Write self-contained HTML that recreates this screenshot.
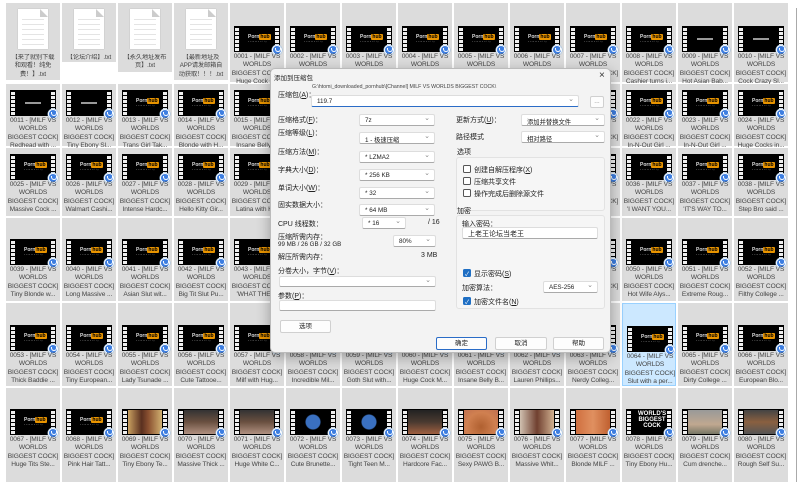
<!DOCTYPE html>
<html><head><meta charset="utf-8">
<style>
*{box-sizing:border-box;margin:0;padding:0}
body{width:800px;height:482px;overflow:hidden;background:#fff;font-family:"Liberation Sans","Noto Sans CJK SC",sans-serif;position:relative}
.cell{position:absolute;width:54px;background:#dcdcdc}
.sel{background:#cce8ff;border:1px solid #99d1ff}
.th{position:absolute;width:46px;height:26px;left:4px;background:#000;overflow:hidden}
.th:before,.th:after{content:"";position:absolute;top:1px;bottom:1px;width:4px;background:repeating-linear-gradient(#000 0 1px,#eee 1px 4px)}
.th:before{left:1px}.th:after{right:1px}
.ph{position:absolute;left:14px;top:8px;font-size:5px;font-weight:bold;color:#ddd;white-space:nowrap}
.ph b{background:#e89400;color:#000;padding:0 1px;border-radius:1px}
.ph i{display:block;font-style:normal;font-size:2px;color:#666;letter-spacing:1px;margin-top:1px}
.tc{position:absolute;left:15px;top:12px;width:16px;height:1.5px;background:#999}
.bi{position:absolute;width:10px;height:10px;border-radius:50%;background:#3d7ee0;border:1.5px solid #fff;box-shadow:0 0 0 .5px #9bd}
.bi:after{content:"";position:absolute;left:2px;top:2px;width:4px;height:3px;border:1px solid #fff;border-top:none;border-radius:0 0 4px 4px}
.lb{position:absolute;left:0;width:54px;text-align:center;font-size:6.6px;line-height:8.4px;color:#444;white-space:nowrap;overflow:hidden;letter-spacing:-.1px}
.doc{position:absolute;left:12px;top:6px;width:30px;height:40px;background:#fff;box-shadow:0 0 1px #aaa;background-image:repeating-linear-gradient(transparent 0 4px,#e4e4e4 4px 5px);background-position:0 6px;background-size:22px 30px;background-repeat:no-repeat;background-origin:content-box;padding:0 4px}
.doc:after{content:"";position:absolute;right:0;top:0;border-style:solid;border-width:0 8px 8px 0;border-color:#fff #fff #ccc #ccc}
#dlg{position:absolute;left:270px;top:68px;width:341px;height:285px;background:#f3f3f3;border:1px solid #bbb;border-radius:5px;box-shadow:0 4px 14px rgba(0,0,0,.3);font-size:7px;color:#222}
#dlg .a{position:absolute;white-space:nowrap}
.dd{position:absolute;background:#fff;border:1px solid #ddd;border-bottom-color:#aaa;border-radius:2px;height:12px;font-size:6.3px;padding:2px 5px;white-space:nowrap}
.dd:after{content:"⌄";position:absolute;right:4px;top:-1px;color:#888;font-size:7px}
.nd:after{content:""}
.grp{position:absolute;border:1px solid #e2e2e2;background:#f6f6f6;border-radius:3px}
.cb{position:absolute;width:8px;height:8px;border:1px solid #555;border-radius:1.5px;background:#fff}
.cbk{background:#1f6fc4;border-color:#1f6fc4}
.cbk:after{content:"✓";color:#fff;font-size:6px;position:absolute;left:1px;top:-1px}
.btn{position:absolute;height:13px;background:#fdfdfd;border:1px solid #d0d0d0;border-radius:2px;text-align:center;font-size:6.5px;line-height:11px}
</style></head><body>
<div id="g"></div>
<div style="position:absolute;left:796px;top:8px;width:1px;height:474px;background:#aaa"></div>

<div id="dlg">
<div class="a" style="left:3px;top:3px;font-size:6.5px">添加到压缩包</div>
<div class="a" style="left:328px;top:1px;font-size:10px;color:#333">×</div>
<div class="a" style="left:7px;top:21px">压缩包(<u>A</u>)：</div>
<div class="a" style="left:41px;top:15px;font-size:5.2px;color:#444">G:\htomi_downloaded_pornhub\[Channel] MILF VS WORLDS BIGGEST COCK\</div>
<div class="dd" style="left:40px;top:26px;width:268px;border-bottom:1px solid #2a6cc7">119.7</div>
<div class="btn" style="left:319px;top:27px;width:14px;height:12px;line-height:9px;color:#888">...</div>

<div class="a" style="left:7px;top:46px">压缩格式(<u>F</u>)：</div>
<div class="a" style="left:7px;top:59px">压缩等级(<u>L</u>)：</div>
<div class="a" style="left:7px;top:78px">压缩方法(<u>M</u>)：</div>
<div class="a" style="left:7px;top:96px">字典大小(<u>D</u>)：</div>
<div class="a" style="left:7px;top:114px">单词大小(<u>W</u>)：</div>
<div class="a" style="left:7px;top:131px">固实数据大小：</div>
<div class="dd" style="left:88px;top:45px;width:76px">7z</div>
<div class="dd" style="left:88px;top:63px;width:76px">1 - 极速压缩</div>
<div class="dd" style="left:88px;top:82px;width:76px">* LZMA2</div>
<div class="dd" style="left:88px;top:100px;width:76px">* 256 KB</div>
<div class="dd" style="left:88px;top:118px;width:76px">* 32</div>
<div class="dd" style="left:88px;top:135px;width:76px">* 64 MB</div>
<div class="a" style="left:7px;top:150px">CPU 线程数：</div>
<div class="dd" style="left:91px;top:148px;width:44px">* 16</div>
<div class="a" style="left:157px;top:150px">/ 16</div>
<div class="a" style="left:7px;top:163px">压缩所需内存：</div>
<div class="a" style="left:7px;top:172px;font-size:6.2px">99 MB / 26 GB / 32 GB</div>
<div class="dd" style="left:122px;top:166px;width:43px">80%</div>
<div class="a" style="left:7px;top:183px">解压所需内存：</div>
<div class="a" style="left:150px;top:183px">3 MB</div>
<div class="a" style="left:7px;top:197px">分卷大小，字节(<u>V</u>)：</div>
<div class="dd" style="left:8px;top:207px;width:157px;height:11px"></div>
<div class="a" style="left:7px;top:222px">参数(<u>P</u>)：</div>
<div class="dd nd" style="left:8px;top:231px;width:157px;height:11px"></div>
<div class="btn" style="left:9px;top:251px;width:51px">选项</div>

<div class="a" style="left:185px;top:46px">更新方式(<u>U</u>)：</div>
<div class="dd" style="left:250px;top:45px;width:84px">添加并替换文件</div>
<div class="a" style="left:185px;top:63px">路径模式</div>
<div class="dd" style="left:250px;top:62px;width:84px">相对路径</div>
<div class="a" style="left:186px;top:78px">选项</div>
<div class="grp" style="left:185px;top:88px;width:149px;height:54px"></div>
<div class="cb" style="left:192px;top:96px"></div><div class="a" style="left:203px;top:96px">创建自解压程序(<u>X</u>)</div>
<div class="cb" style="left:192px;top:108px"></div><div class="a" style="left:203px;top:108px">压缩共享文件</div>
<div class="cb" style="left:192px;top:120px"></div><div class="a" style="left:203px;top:120px">操作完成后删除源文件</div>
<div class="a" style="left:186px;top:137px">加密</div>
<div class="grp" style="left:185px;top:146px;width:149px;height:94px"></div>
<div class="a" style="left:191px;top:150px">输入密码：</div>
<div class="dd nd" style="left:191px;top:158px;width:136px;height:12px;font-size:7px;padding-top:1px">上老王论坛当老王</div>
<div class="cb cbk" style="left:192px;top:200px"></div><div class="a" style="left:203px;top:200px">显示密码(<u>S</u>)</div>
<div class="a" style="left:191px;top:214px">加密算法：</div>
<div class="dd" style="left:272px;top:212px;width:55px">AES-256</div>
<div class="cb cbk" style="left:192px;top:228px"></div><div class="a" style="left:203px;top:228px">加密文件名(<u>N</u>)</div>

<div class="btn" style="left:165px;top:268px;width:51px;border-color:#2a6cc7">确定</div>
<div class="btn" style="left:224px;top:268px;width:52px">取消</div>
<div class="btn" style="left:282px;top:268px;width:51px">帮助</div>
</div>

<script>
var titles={1:"Huge Cock s...",2:"Huge Cock ...",3:"Hot Teen ...",4:"Big Tits ...",5:"Slutty ...",6:"Tiny Teen ...",7:"Big Tit Te...",8:"Cashier turns i...",9:"Hot Asian Bab...",10:"Cock Crazy Sl...",
11:"Redhead with ...",12:"Tiny Ebony Sl...",13:"Trans Girl Tak...",14:"Blonde with H...",15:"Insane Belly ...",22:"In-N-Out Girl ...",23:"In-N-Out Girl ...",24:"Huge Cocks in...",
25:"Massive Cock ...",26:"Walmart Cashi...",27:"Intense Hardc...",28:"Hello Kitty Gir...",29:"Latina with H...",36:"'I WANT YOU...",37:"'IT'S WAY TO...",38:"Step Bro said ...",
39:"Tiny Blonde w...",40:"Long Massive ...",41:"Asian Slut wit...",42:"Big Tit Slut Pu...",43:"'WHAT THE ...",50:"Hot Wife Alys...",51:"Extreme Roug...",52:"Filthy College ...",
53:"Thick Baddie ...",54:"Tiny European...",55:"Lady Tsunade ...",56:"Cute Tattooe...",57:"Milf with Hug...",58:"Incredible Mil...",59:"Goth Slut with...",60:"Huge Cock M...",61:"Insane Belly B...",62:"Lauren Phillips...",63:"Nerdy Colleg...",64:"Slut with a per...",65:"Dirty College ...",66:"European Blo...",
67:"Huge Tits Ste...",68:"Pink Hair Tatt...",69:"Tiny Ebony Te...",70:"Massive Thick ...",71:"Huge White C...",72:"Cute Brunette...",73:"Tight Teen M...",74:"Hardcore Fac...",75:"Sexy PAWG B...",76:"Massive Whit...",77:"Blonde MILF ...",78:"Tiny Ebony Hu...",79:"Cum drenche...",80:"Rough Self Su..."};
var imgs={69:"linear-gradient(90deg,#c9a060,#5a3020 40%,#8a5030 60%,#d0b070)",70:"linear-gradient(#333,#6a5040 50%,#b09080)",71:"linear-gradient(#333,#6a5040 50%,#b09080)",72:"radial-gradient(circle at 50% 50%,#3a70c0 0 7px,#000 8px)",73:"radial-gradient(circle at 50% 50%,#3a70c0 0 7px,#000 8px)",74:"linear-gradient(#222,#4a3a30 50%,#a06040)",75:"radial-gradient(ellipse at 50% 70%,#b06030,#d08050 60%,#c07050)",76:"linear-gradient(90deg,#d0c0b0,#704030 50%,#d0b090)",77:"linear-gradient(90deg,#d07040,#e09060 50%,#c06030)",79:"linear-gradient(#999,#c0a890 60%,#776)",80:"linear-gradient(#444,#8a6040 50%,#555)"};
var tc={9:1,10:1,11:1,12:1};
var thumbTop=[26,90,154,239,325,409],rowTop=[3,84,148,218,303,388],rowBot=[82,146,216,301,386,482];
var txtLines=[["【来了就别下载","和观看！纯免","费！】.txt"],["【论坛介绍】.txt"],["【永久地址发布","页】.txt"],["【最新地址及","APP请发邮箱自","动获取！！！.txt"]];
var h="";
for(var r=0;r<6;r++)for(var c=0;c<14;c++){
 var x=6+c*56,y=rowTop[r],hh=rowBot[r]-y;
 if(r==0&&c<4){
  var L=txtLines[c];hh=[77,59,69,77][c];
  h+='<div class="cell" style="left:'+x+'px;top:'+y+'px;height:'+hh+'px"><div class="doc"></div><div class="lb" style="top:51px;font-size:6.2px">'+L.join("<br>")+'</div></div>';
  continue;}
 var n=r==0?c-3:r*14+c-3;
 var num=("000"+n).slice(-4);
 var tt=thumbTop[r]-y;
 var inner;
 if(imgs[n])inner='<div style="position:absolute;left:6px;right:6px;top:1px;bottom:1px;background:'+imgs[n]+'"></div>';
 else if(n==78)inner='<div style="position:absolute;left:12px;top:2px;font-size:6px;font-weight:bold;color:#fff;line-height:6px;text-align:center">WORLD\'S<br>BIGGEST<br>COCK</div>';
 else if(tc[n])inner='<div class="tc"></div>';
 else inner='<div class="ph">Porn<b>hub</b><i>community</i></div>';
 h+='<div class="cell'+(n==64?' sel':'')+'" style="left:'+x+'px;top:'+y+'px;height:'+hh+'px"><div class="th" style="top:'+tt+'px">'+inner+'</div><div class="bi" style="left:42px;top:'+(tt+19)+'px"></div><div class="lb" style="top:'+(tt+27)+'px">'+num+' - [MILF VS<br>WORLDS<br>BIGGEST COCK]<br>'+(titles[n]||"Hot Teen ...")+'</div></div>';
}
document.getElementById("g").innerHTML=h;
</script>
</body></html>
